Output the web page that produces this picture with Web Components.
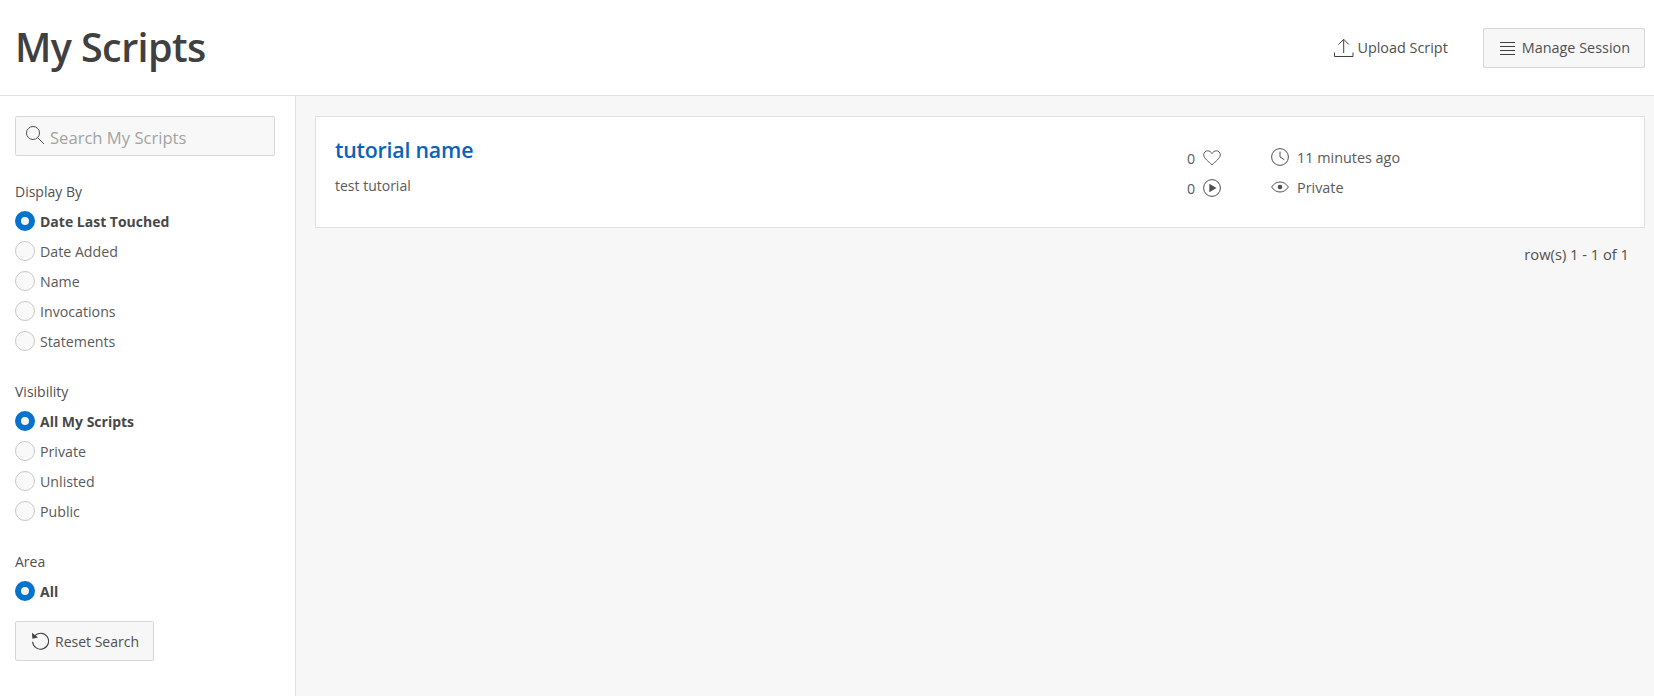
<!DOCTYPE html>
<html lang="en"><head><meta charset="utf-8"><title>My Scripts</title>
<style>
html,body{margin:0;height:100%;background:#fff}
body{font-family:"Open Sans","Noto Sans",sans-serif;color:#404040;font-size:14px}
</style></head><body>
<script-page>
  <page-header slot="header" title="My Scripts">
    <ui-button plain icon="upload">Upload Script</ui-button>
    <ui-button icon="menu">Manage Session</ui-button>
  </page-header>
  <div slot="side">
    <search-box placeholder="Search My Scripts"></search-box>
    <filter-group label="Display By" options="Date Last Touched|Date Added|Name|Invocations|Statements"></filter-group>
    <filter-group label="Visibility" options="All My Scripts|Private|Unlisted|Public"></filter-group>
    <filter-group label="Area" options="All"></filter-group>
    <ui-button icon="reset" style="margin-top:15px;gap:6px;font-size:14px">Reset Search</ui-button>
  </div>
  <div slot="main">
    <script-card name="tutorial name" desc="test tutorial" likes="0" runs="0" when="11 minutes ago" vis="Private"></script-card>
    <row-count>row(s) 1 - 1 of 1</row-count>
  </div>
</script-page>
<script>
const ICONS={
 upload:'<svg width="20" height="20" viewBox="0 0 20 20" fill="none" stroke="#404040" stroke-width="1"><path d="M.5 14.500v4h18.500v-4M9.700 15V1.500M4.500 6.500l5.200-5.200 5.200 5.200"/></svg>',
 menu:'<svg width="16" height="16" viewBox="0 0 16 16" fill="none" stroke="#404040" stroke-width="1"><path d="M1 2.500h15M1 6.500h15M1 10.500h15M1 14.500h15"/></svg>',
 reset:'<svg width="18" height="18" viewBox="0 0 18 18" fill="none" stroke="#404040" stroke-width="1.100"><path d="M3.600 3.900A8 8 0 1 1 1.600 9.800"/><path d="M1 .8l.4 6 5.600-1.200z" fill="#404040" stroke="none"/></svg>',
 search:'<svg width="20" height="20" viewBox="0 0 20 20" fill="none" stroke="#505050" stroke-width="1"><circle cx="8" cy="8" r="6.500"/><path d="M12.700 12.700l6.300 6.300"/></svg>',
 heart:'<svg width="18" height="16" viewBox="0 0 18 16" fill="none" stroke="#5a5a5a" stroke-width="1"><path d="M9 14.800C5.500 11.500.7 8.300.7 4.800.7 2.500 2.500.8 4.700.8 6.500.8 8 1.800 9 3.600 10 1.800 11.500.8 13.300.8c2.200 0 4 1.700 4 4 0 3.500-4.800 6.700-8.300 10z"/></svg>',
 play:'<svg width="18" height="18" viewBox="0 0 18 18"><circle cx="9" cy="9" r="8.400" fill="none" stroke="#505050"/><path d="M6.300 4.700l7.200 4.300-7.200 4.300z" fill="#505050"/></svg>',
 clock:'<svg width="18" height="18" viewBox="0 0 18 18" fill="none" stroke="#505050"><circle cx="9" cy="9" r="8.400"/><path d="M9 3.500V9l4.400 2.800"/></svg>',
 eye:'<svg width="18" height="12" viewBox="0 0 18 12" fill="none" stroke="#505050"><path d="M.6 6C2.800 2.700 5.700 1 9 1s6.200 1.700 8.400 5c-2.200 3.300-5.100 5-8.400 5S2.800 9.300.6 6z"/><circle cx="9" cy="6" r="2.300" fill="#505050" stroke="none"/></svg>'
};
function def(name,css,html){
  customElements.define(name,class extends HTMLElement{
    connectedCallback(){
      if(this.shadowRoot)return;
      const a=n=>this.getAttribute(n)||'';
      const r=this.attachShadow({mode:'open'});
      r.innerHTML='<style>'+css+'</style>'+(typeof html==='function'?html(a,this):html);
    }
  });
}
def('script-page',`
 :host{display:grid;grid-template-columns:296px 1fr;grid-template-rows:96px 1fr;min-height:100vh;box-sizing:border-box}
 header{grid-column:1/3;border-bottom:1px solid #e0e0e0;display:block}
 aside{border-right:1px solid #e0e0e0;padding:20px 20px 0 15px}
 main{background:#f7f7f7;padding:20px 9px 0 19px}`,
 `<header><slot name="header"></slot></header><aside><slot name="side"></slot></aside><main><slot name="main"></slot></main>`);
def('page-header',`
 :host{display:flex;align-items:center;justify-content:space-between;height:95px;padding:0 9px 0 15px;box-sizing:border-box}
 h1{margin:0;font:600 39.500px/1 "Open Sans",sans-serif;color:#404040;letter-spacing:-.6px}
 div{display:flex;align-items:center;gap:11px}`,
 a=>`<h1>${a('title')}</h1><div><slot></slot></div>`);
def('ui-button',`
 :host{display:inline-flex;align-items:center;height:40px;box-sizing:border-box;border:1px solid #d8d8d8;border-radius:2px;background:#f7f7f7;padding:0 14px 0 15px;gap:7px;font-size:14.400px;color:#505050}
 :host([plain]){background:none;border-color:transparent;padding:0 23px 0 8px;gap:3px}
 svg{display:block}`,
 (a)=>ICONS[a('icon')]+'<span><slot></slot></span>');
def('search-box',`
 :host{display:flex;align-items:center;width:260px;height:40px;box-sizing:border-box;border:1px solid #d8d8d8;border-radius:2px;background:#f8f8f8;padding:0 9px;gap:5px;margin-bottom:26px;color:#a3a3a3;font-size:16.600px}
 span{padding-top:3px}
 svg{display:block;margin-top:-2px}`,
 a=>ICONS.search+`<span>${a('placeholder')}</span>`);
def('filter-group',`
 :host{display:block;margin-bottom:26px}
 :host(:last-of-type){margin-bottom:0}
 .l{height:20px;line-height:20px;font-size:14px;color:#505050;margin-bottom:4px}
 .o{display:flex;align-items:center;gap:5px;height:30px;font-size:14.200px;color:#5a5a5a}
 .r{width:20px;height:20px;box-sizing:border-box;border-radius:50%;border:1px solid #c8c8c8;background:#f9f9f9}
 .o.on{font-weight:700;color:#484848;font-size:14px}
 .o.on .r{border:6px solid #0572ce;background:#f4f4f4}`,
 a=>`<div class="l">${a('label')}</div>`+a('options').split('|').map((o,i)=>`<div class="o${i?'':' on'}"><span class="r"></span><span>${o}</span></div>`).join(''));
def('script-card',`
 :host{display:flex;height:112px;box-sizing:border-box;border:1px solid #e2e2e2;background:#fff}
 .m{width:849px;padding:17px 0 0 19px;box-sizing:border-box}
 h2{margin:0;font:600 21.300px/32px "Open Sans",sans-serif;color:#0a63b8;letter-spacing:-.2px}
 p{margin:10px 0 0;font-size:14px;line-height:20px;color:#5a5a5a}
 .s{width:44px;padding-top:26px;display:grid;grid-template-columns:1fr 18px;grid-auto-rows:30px;align-items:center;column-gap:8px;justify-items:end;font-size:14.200px;color:#5a5a5a;box-sizing:border-box;margin-left:12px}
 .t{padding:25px 0 0 50px;font-size:14.400px;color:#5a5a5a;display:grid;grid-template-columns:18px auto;grid-auto-rows:30px;column-gap:8px;align-items:center;align-self:start}
 svg{display:block}`,
 a=>`<div class="m"><h2>${a('name')}</h2><p>${a('desc')}</p></div><div class="s"><span>${a('likes')}</span>${ICONS.heart}<span>${a('runs')}</span>${ICONS.play}</div><div class="t">${ICONS.clock}<span>${a('when')}</span>${ICONS.eye}<span>${a('vis')}</span></div>`);
def('row-count',`:host{display:block;text-align:right;padding:16px 16px 0 0;font-size:14.700px;line-height:20px;color:#505050}`,`<slot></slot>`);
</script>
</body></html>
